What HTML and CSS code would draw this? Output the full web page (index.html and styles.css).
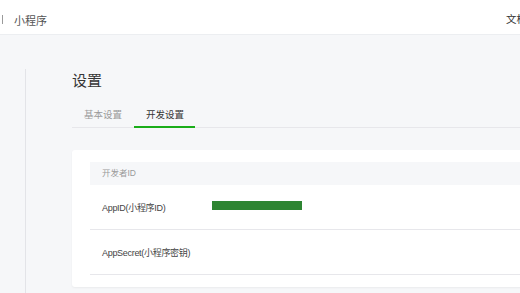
FILE: index.html
```html
<!DOCTYPE html>
<html lang="zh-CN">
<head>
    <meta charset="UTF-8">
    <meta name="viewport" content="width=device-width, initial-scale=1.0">
    <title>开发设置</title>
    <link rel="stylesheet" href="styles.css">
</head>
<body>
    <div class="header">
        <div class="brand">
            <span class="brand-sep"></span>
            <span class="brand-name">小程序</span>
        </div>
        <div class="header-links">
            <span>文档</span>
        </div>
    </div>
    <div class="main">
        <div class="sidebar"></div>
        <div class="content">
            <h2 class="page-title">设置</h2>
            <div class="tabs">
                <div class="tab">基本设置</div>
                <div class="tab active">开发设置</div>
            </div>
            <div class="card">
                <div class="section-head">开发者ID</div>
                <div class="row">
                    <div class="row-label">AppID(小程序ID)</div>
                    <div class="row-value"><span class="masked"></span></div>
                </div>
                <div class="row">
                    <div class="row-label">AppSecret(小程序密钥)</div>
                    <div class="row-value"></div>
                </div>
            </div>
        </div>
    </div>
</body>
</html>
```

FILE: styles.css
```css
html, body {
    margin: 0;
    padding: 0;
    height: 100%;
    overflow: hidden;
}
body {
    font-family: "Noto Sans CJK SC", "Noto Sans", sans-serif;
    background-color: #f6f7f9;
    color: #353535;
}
.header {
    height: 34px;
    background: white;
    border-bottom: 1px solid #eceef1;
    display: flex;
    align-items: center;
    justify-content: space-between;
    width: 527px;
}
.brand {
    display: flex;
    align-items: center;
    padding-top: 5px;
}
.brand-sep {
    width: 1px;
    height: 9px;
    margin-left: 2px;
    margin-right: 11px;
    background: #9a9a9a;
}
.brand-name {
    font-size: 11px;
    color: #555;
}
.header-links {
    font-size: 10.5px;
    color: #353535;
    padding-top: 3px;
}
.main {
    display: flex;
    width: 560px;
}
.sidebar {
    width: 25px;
    margin-top: 34px;
    height: 300px;
    border-right: 1px solid #e3e4e8;
}
.content {
    flex: 1;
    padding: 33px 0 0 46px;
}
.page-title {
    margin: 0;
    font-size: 15px;
    font-weight: normal;
    line-height: 24px;
    color: #353535;
}
.tabs {
    display: flex;
    margin-top: 11px;
    border-bottom: 1px solid #e7e7eb;
}
.tab {
    font-size: 9.5px;
    line-height: 18px;
    padding: 2px 12px 3px;
    color: #9a9a9a;
}
.tab:first-child {
    padding-left: 12px;
}
.tab.active {
    color: #353535;
    border-bottom: 2px solid #1aad19;
    margin-bottom: -1px;
    padding-right: 11px;
}
.card {
    margin-top: 22px;
    background: white;
    border-radius: 3px;
    box-shadow: 0 1px 2px rgba(0, 0, 0, 0.05);
    padding: 12px 0 12px 18px;
}
.section-head {
    height: 23px;
    line-height: 23px;
    background: #f6f7f9;
    padding-left: 12px;
    font-family: "Liberation Sans", "Noto Sans CJK SC", sans-serif;
    font-size: 8.5px;
    color: #9a9a9a;
}
.row {
    display: flex;
    align-items: center;
    height: 44px;
    border-bottom: 1px solid #e7e7eb;
    padding-left: 12px;
}
.row-label {
    width: 110px;
    font-family: "Liberation Sans", "Noto Sans CJK SC", sans-serif;
    font-size: 9px;
    letter-spacing: -0.3px;
    color: #444;
}
.masked {
    display: block;
    width: 90px;
    height: 9px;
    background: #2e8532;
    margin-top: -4px;
}
```
